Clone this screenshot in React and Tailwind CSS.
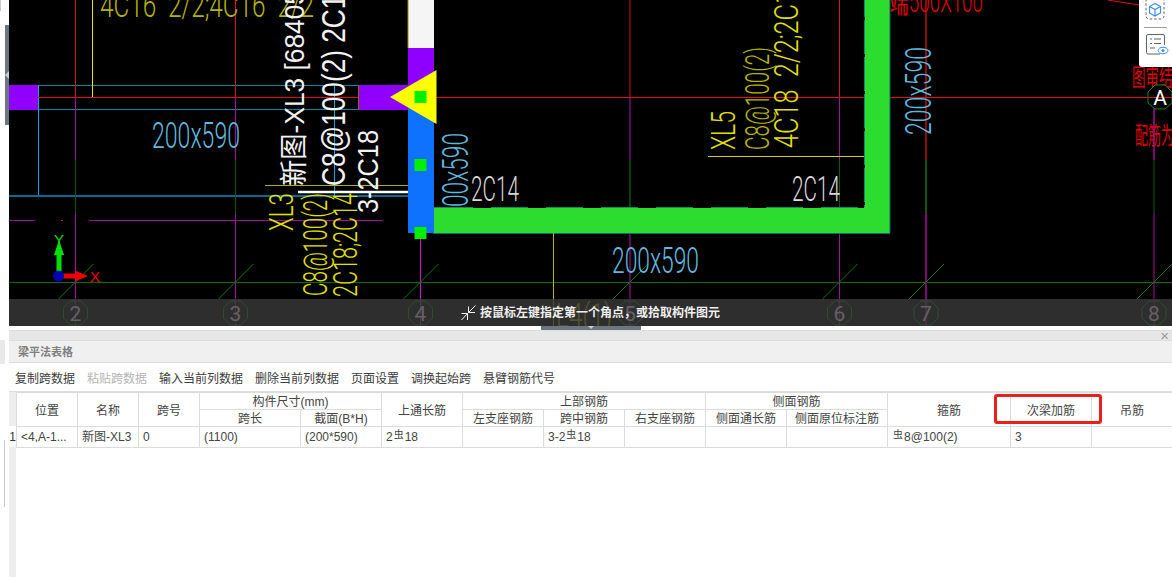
import React from "react";

const THIN = '"Roboto","Liberation Sans",sans-serif';
const CJK = '"Liberation Sans","Noto Sans CJK SC",sans-serif';

function Cad({ x, y, rot, len, size = 34, color, children, weight = 300, family = THIN }) {
  return (
    <text
      transform={`translate(${x} ${y})${rot ? " rotate(-90)" : ""}`}
      fontFamily={family}
      fontWeight={weight}
      fontSize={size}
      fill={color}
      textLength={len}
      lengthAdjust="spacingAndGlyphs"
    >
      {children}
    </text>
  );
}

function GridAxis({ x, label, segs, width = 1 }) {
  return (
    <g>
      {segs.map(([a, b, c], i) => (
        <line key={i} x1={x} x2={x} y1={a} y2={b} stroke={c} strokeWidth={width} />
      ))}
      <line x1={x - 17} y1={299} x2={x + 18} y2={264} stroke="#0c7a0c" strokeWidth="1" />
      <polygon
        points={`${x - 5},${301} ${x + 5},${301} ${x + 12},${308} ${x + 12},${318} ${x + 5},${325} ${x - 5},${325} ${x - 12},${318} ${x - 12},${308}`}
        fill="none"
        stroke="#0f8a0f"
      />
      <text x={x} y={321} textAnchor="middle" fontFamily={THIN} fontWeight="400" fontSize="21" fill="#fff">
        {label}
      </text>
    </g>
  );
}

function CadDrawing() {
  const RED = "#e01010";
  const MAG = "#a0109a";
  const GRN = "#0a5a0a";
  const yellow = "#e0e000";
  const olive = "#b4b400";
  const cyan = "#62b8dc";
  return (
    <svg viewBox="9 0 1163 326" className="block h-[326px] w-[1163px]">
      {/* outline of the beam on the left */}
      <line x1="38" x2="408" y1="85.5" y2="85.5" stroke="#0a86a8" />
      <line x1="38" x2="408" y1="109.5" y2="109.5" stroke="#0a86a8" />
      <line x1="38.5" x2="38.5" y1="85" y2="196" stroke="#00a8dc" />
      <line x1="9" x2="408" y1="196" y2="196" stroke="#006a94" strokeWidth="2" />
      <line x1="334.5" x2="334.5" y1="85" y2="196" stroke="#00a8dc" />
      <line x1="9" x2="408" y1="220.5" y2="220.5" stroke={MAG} strokeDasharray="26 26 2 26 94 0" />
      <line x1="100" x2="355" y1="220.5" y2="220.5" stroke={MAG} />
      <line x1="9" x2="1172" y1="282.5" y2="282.5" stroke="#087008" />
      <line x1="92.5" x2="92.5" y1="0" y2="97" stroke="#e8e800" />

      {/* grid axes */}
      <GridAxis x={75.5} label="2" segs={[[0, 97, RED], [97, 160, MAG], [160, 213, GRN], [213, 326, MAG]]} />
      <GridAxis x={235.5} label="3" segs={[[0, 97, RED], [97, 160, MAG], [160, 213, GRN], [213, 326, MAG]]} />
      <GridAxis x={420.5} label="4" segs={[[233, 326, "#d010c8"]]} />
      <GridAxis x={630} label="5" width={1.5} segs={[[0, 97, "#8c0a0a"], [97, 160, "#78087a"], [160, 207, GRN], [233, 326, "#78087a"]]} />
      <GridAxis x={839.5} label="6" segs={[[0, 97, RED], [97, 160, MAG], [160, 207, GRN], [233, 326, MAG]]} />
      <GridAxis x={926} label="7" width={2} segs={[[0, 160, "#8c0a0a"], [160, 213, GRN], [213, 326, "#80087a"]]} />
      <GridAxis x={1154} label="8" segs={[[97, 160, MAG], [160, 213, GRN], [213, 326, MAG]]} />

      <line x1="38" x2="408" y1="97.5" y2="97.5" stroke={RED} />
      <line x1="430" x2="1172" y1="97.5" y2="97.5" stroke={RED} />
      <line x1="1108" x2="1139" y1="0" y2="5" stroke={RED} />

      {/* purple stubs */}
      <rect x="9" y="85" width="29" height="25" fill="#9000ff" />
      <rect x="358" y="85" width="50" height="25" fill="#9000ff" />
      <line x1="358.5" x2="358.5" y1="85" y2="110" stroke="#8a6a00" />

      {/* green L-shaped beam */}
      <rect x="433" y="207" width="457" height="26" fill="#2cdd30" />
      <rect x="864" y="0" width="26" height="233" fill="#2cdd30" />
      <line x1="433" x2="864" y1="207.5" y2="207.5" stroke="#0a8c78" />
      <line x1="864.5" x2="864.5" y1="0" y2="207" stroke="#0a8c78" />
      <line x1="473" x2="864" y1="207.5" y2="207.5" stroke="#000" strokeDasharray="18 37" />
      <line x1="864.5" x2="864.5" y1="17" y2="207" stroke="#000" strokeDasharray="3 34" />
      <line x1="433" x2="890" y1="233.5" y2="233.5" stroke="#0a6a66" />
      <line x1="890" x2="890" y1="0" y2="233" stroke="#0a6a66" />

      {/* selected column */}
      <rect x="408" y="0" width="26" height="48" fill="#f5f5f5" />
      <rect x="408" y="48" width="26" height="55" fill="#9000ff" />
      <rect x="408" y="103" width="26" height="130" fill="#0f72ff" />
      <line x1="408" x2="408" y1="0" y2="48" stroke="#a09000" />
      <polygon points="390,97 436.5,70 436.5,124" fill="#ffff00" />
      <rect x="414.5" y="91" width="12" height="12" fill="#00f000" />
      <rect x="414.5" y="159" width="12" height="12" fill="#00f000" />
      <rect x="414.5" y="227" width="12" height="12" fill="#00f000" />

      {/* yellow leaders */}
      <line x1="265" x2="408" y1="185.5" y2="185.5" stroke="#b0b000" />
      <line x1="298" x2="408" y1="192" y2="192" stroke="#fff" strokeWidth="2.5" />
      <line x1="708" x2="864" y1="156.5" y2="156.5" stroke="#d0d000" />
      <line x1="553.5" x2="553.5" y1="233" y2="326" stroke="#b8b800" />

      {/* annotation text */}
      <Cad x={100} y={17} len={214} color={olive}>{"4C16\u00a0\u00a02/2;4C16\u00a0\u00a02/2"}</Cad>
      <Cad x={152} y={148} len={88} size={36} color={cyan}>200x590</Cad>
      <Cad x={612} y={273} len={87} size={36} color={cyan}>200x590</Cad>
      <Cad x={931} y={135} rot len={88} size={36} color={cyan}>200x590</Cad>
      <Cad x={468} y={207} rot len={74} size={36} color={cyan}>00x590</Cad>
      <Cad x={471} y={201} len={48} size={35} color="#d8d8d8">2C14</Cad>
      <Cad x={792} y={201} len={48} size={35} color="#d8d8d8">2C14</Cad>
      <Cad x={556} y={327} len={56} size={34} color={olive}>L4(1)</Cad>

      <Cad x={293} y={231} rot len={38} color={yellow}>XL3</Cad>
      <Cad x={327} y={296} rot len={103} color={yellow}>C8@100(2)</Cad>
      <Cad x={357} y={297} rot len={104} color={yellow}>2C18;2C14</Cad>
      <Cad x={735} y={150} rot len={39} color={yellow}>XL5</Cad>
      <Cad x={769} y={150} rot len={103} color={olive}>C8@100(2)</Cad>
      <Cad x={798} y={148} rot len={172} color={yellow}>{"4C18\u00a0\u00a02/2;2C14"}</Cad>

      <Cad x={304} y={186} rot len={196} size={28} color="#f2f2f2" family={CJK} weight={400}>新图-XL3 [68405</Cad>
      <Cad x={345} y={186} rot len={206} size={34} color="#f2f2f2" family={CJK} weight={400}>C8@100(2) 2C18</Cad>
      <Cad x={378} y={213} rot len={83} size={29} color="#f2f2f2" family={CJK} weight={400}>3-2C18</Cad>

      <Cad x={890} y={12} len={93} size={30} color="#e00000">端500X100</Cad>
      <Cad x={1132} y={86} len={54} size={24} color="#e00000" family={CJK} weight={400}>图审结施</Cad>
      <Cad x={1135} y={144} len={52} size={24} color="#e00000" family={CJK} weight={400}>配筋为级</Cad>

      {/* bubble A */}
      <polygon points="1155,85 1165,85 1172,92 1172,103 1165,109 1155,109 1148,103 1148,92" fill="#000" stroke="#0f8a0f" />
      <line x1="1154" x2="1154" y1="109" y2="160" stroke={MAG} />
      <line x1="1148" x2="1172" y1="97.5" y2="97.5" stroke={RED} />
      <text x="1160" y="105" textAnchor="middle" fontFamily={THIN} fontWeight="400" fontSize="21" fill="#fff">A</text>

      {/* axis gizmo */}
      <rect x="56.5" y="254" width="5" height="22" fill="#00e000" />
      <polygon points="59,240 64,255 54,255" fill="#00e000" />
      <rect x="60" y="273.5" width="18" height="5" fill="#f00000" />
      <polygon points="88,276 76,271 76,281" fill="#f00000" />
      <circle cx="58.5" cy="276" r="5.5" fill="#0000b0" />
      <text x="59" y="245" textAnchor="middle" fontFamily={CJK} fontSize="15" fill="#00e000">Y</text>
      <text x="95" y="282" textAnchor="middle" fontFamily={CJK} fontSize="15" fill="#f00000">X</text>
    </svg>
  );
}

function SideTools() {
  return (
    <div className="absolute right-0 top-0 flex h-[67px] w-[33px] flex-col items-center rounded-bl-[3px] bg-white pr-[1px]">
      <svg width="20" height="20" viewBox="0 0 20 20">
        <rect x="1" y="-2" width="18" height="21" rx="3" fill="none" stroke="#5d6470" strokeDasharray="2.5 2" />
        <path d="M10 3.5l5.5 3v6.5l-5.500 3-5.500-3V6.500zM4.500 6.500l5.500 3 5.500-3M10 9.500V16" fill="none" stroke="#3d8ef0" strokeWidth="1.2" />
      </svg>
      <div className="mt-[7px] h-[1px] w-[23px] bg-[#9aa0a6]" />
      <svg width="24" height="22" viewBox="0 0 24 22" className="ml-[4px] mt-[6px]">
        <path d="M15 20H3a1.500 1.500 0 0 1-1.500-1.500V2A1.500 1.500 0 0 1 3 .5h15A1.500 1.500 0 0 1 19.500 2v9" fill="none" stroke="#5d6470" />
        <path d="M5 5h2M9 5h7M5 9.500h2M9 9.500h7M5 14h5" stroke="#5d6470" />
        <ellipse cx="18" cy="16.500" rx="5" ry="3.200" fill="none" stroke="#3d8ef0" />
        <circle cx="18" cy="16.500" r="1.500" fill="#3d8ef0" />
      </svg>
    </div>
  );
}

function StatusBar() {
  return (
    <div className="absolute inset-x-0 bottom-0 flex h-[27px] items-center justify-center gap-[4px] bg-[#3a3a3a]/80">
      <svg width="15" height="16" viewBox="0 0 15 16">
        <path d="M14.500 0.500L7.500 7.500M7.500 1.500V7.500H14M0.500 15L6.500 8.500M0.500 8.500H6.500V15" fill="none" stroke="#f2f2f2" strokeWidth="1" />
      </svg>
      <span className="text-[12px] font-bold text-[#eeeeee]">按鼠标左键指定第一个角点，或拾取构件图元</span>
    </div>
  );
}

const TOOLS = [
  ["复制跨数据", false],
  ["粘贴跨数据", true],
  ["输入当前列数据", false],
  ["删除当前列数据", false],
  ["页面设置", false],
  ["调换起始跨", false],
  ["悬臂钢筋代号", false],
];

const widths = [61, 61, 61, 101, 81, 81, 81, 81, 81, 81, 101, 123, 81, 81];
const th = "border border-[#dcdcdc] px-0 pb-0 pt-[2px] text-center font-normal leading-none";
const thTop = "border border-[#dcdcdc] px-0 pb-0 pt-[1px] text-center font-normal leading-none";
const td = "border border-[#dcdcdc] px-[4px] py-0 text-left font-normal leading-none whitespace-nowrap overflow-hidden";

function Bar({ n }) {
  return (
    <>
      <span className="relative top-[-3px] mx-[1px] text-[10px]">虫</span>
      {n}
    </>
  );
}

function BeamTable() {
  return (
    <div className="relative flex-1">
      <table className="w-[1156px] table-fixed border-collapse text-[12px] text-[#444444]">
        <colgroup>
          {widths.map((w, i) => (
            <col key={i} style={{ width: w }} />
          ))}
        </colgroup>
        <thead>
          <tr className="h-[17px]">
            <th rowSpan={2} className={th}>位置</th>
            <th rowSpan={2} className={th}>名称</th>
            <th rowSpan={2} className={th}>跨号</th>
            <th colSpan={2} className={thTop}>构件尺寸(mm)</th>
            <th rowSpan={2} className={th}>上通长筋</th>
            <th colSpan={3} className={thTop}>上部钢筋</th>
            <th colSpan={2} className={thTop}>侧面钢筋</th>
            <th rowSpan={2} className={th}>箍筋</th>
            <th rowSpan={2} className={th}>次梁加筋</th>
            <th rowSpan={2} className={th}>吊筋</th>
          </tr>
          <tr className="h-[17px]">
            <th className={th}>跨长</th>
            <th className={th}>截面(B*H)</th>
            <th className={th}>左支座钢筋</th>
            <th className={th}>跨中钢筋</th>
            <th className={th}>右支座钢筋</th>
            <th className={th}>侧面通长筋</th>
            <th className={th}>侧面原位标注筋</th>
          </tr>
        </thead>
        <tbody>
          <tr className="h-[21px]">
            <td className={td}>&lt;4,A-1...</td>
            <td className={td}>新图-XL3</td>
            <td className={td}>0</td>
            <td className={td}>(1100)</td>
            <td className={td}>(200*590)</td>
            <td className={td}>2<Bar n="18" /></td>
            <td className={td}></td>
            <td className={td}>3-2<Bar n="18" /></td>
            <td className={td}></td>
            <td className={td}></td>
            <td className={td}></td>
            <td className={td}><Bar n="8@100(2)" /></td>
            <td className={td}>3</td>
            <td className={td}></td>
          </tr>
        </tbody>
      </table>
      <div className="absolute left-[978px] top-[2px] h-[30px] w-[108px] rounded-[3px] border-[3px] border-[#e8211d]" />
    </div>
  );
}

export default function App() {
  return (
    <div
      className="flex h-[577px] w-[1172px] flex-col overflow-hidden bg-white"
      style={{ fontFamily: CJK }}
    >
      <div className="flex h-[326px] shrink-0">
        <div className="flex w-[9px] shrink-0 flex-col">
          <div className="h-[11px] w-[1px] bg-[#cccccc]" />
          <div className="ml-[5px] mt-[14px] flex h-[100px] w-[4px] items-center bg-[#6b7680]">
            <div className="h-0 w-0 border-y-[4px] border-r-[4px] border-y-transparent border-r-[#c8ccd0]" />
          </div>
        </div>
        <div className="relative w-[1163px] overflow-hidden bg-black">
          <CadDrawing />
          <SideTools />
          <StatusBar />
        </div>
      </div>

      <div className="flex h-[4px] shrink-0 justify-start pl-[541px]">
        <div className="flex h-[4px] w-[100px] justify-center bg-[#6b7680]">
          <div className="h-0 w-0 border-x-[3px] border-t-[3px] border-x-transparent border-t-[#c8ccd0]" />
        </div>
      </div>

      <div className="flex min-h-0 flex-1">
        <div className="flex w-[9px] shrink-0 flex-col">
          <div className="h-[10px]" />
          <div className="h-[24px] w-[5px] bg-[#e8e8e8]" />
          <div className="mt-[76px] h-[67px] w-[5px] border-r border-[#cccccc]" />
        </div>
        <div className="flex min-w-0 flex-1 flex-col">
          <div className="flex h-[11px] shrink-0 items-center justify-end border-y border-[#dddddd] bg-[#e6e6e6] pr-[3px]">
            <span className="text-[15px] leading-none text-[#999999]">×</span>
          </div>
          <div className="flex h-[22px] shrink-0 items-center border-b border-[#dddddd] bg-[#f0f0f0] pl-[9px] pt-[2px] text-[11px] font-bold text-[#808080]">
            梁平法表格
          </div>
          <div className="flex h-[29px] shrink-0 items-center gap-[12px] border-b border-[#dddddd] pl-[6px] pt-[3px] text-[12px]">
            {TOOLS.map(([t, off]) => (
              <span key={t} className={off ? "text-[#b4b4b4]" : "text-[#3c3c3c]"}>{t}</span>
            ))}
          </div>
          <div className="flex min-h-0 flex-1">
            <div className="flex w-[7px] shrink-0 flex-col bg-[#eeeeee]">
              <div className="h-[34px]" />
              <div className="flex h-[21px] items-center justify-center bg-white text-[12px] text-[#333333]">1</div>
            </div>
            <BeamTable />
          </div>
        </div>
      </div>
    </div>
  );
}
